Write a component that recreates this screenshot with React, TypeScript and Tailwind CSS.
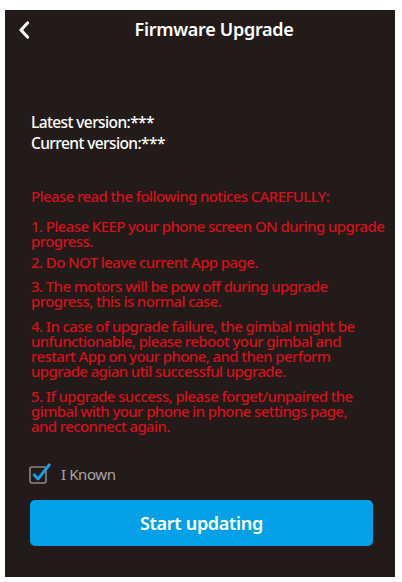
import React from 'react';

const notices: { lines: string[]; mt: string }[] = [
  { mt: 'mt-0', lines: ['1. Please KEEP your phone screen ON during upgrade', 'progress.'] },
  { mt: 'mt-[6px]', lines: ['2. Do NOT leave current App page.'] },
  { mt: 'mt-[9px]', lines: ['3. The motors will be pow off during upgrade', 'progress, this is normal case.'] },
  {
    mt: 'mt-[10px]',
    lines: [
      '4. In case of upgrade failure, the gimbal might be',
      'unfunctionable,  please reboot your gimbal and',
      'restart App on your phone, and then perform',
      'upgrade agian util successful upgrade.',
    ],
  },
  {
    mt: 'mt-[10px]',
    lines: [
      '5. If upgrade success, please forget/unpaired the',
      'gimbal with your phone in phone settings page,',
      'and reconnect again.',
    ],
  },
];

export default function App() {
  return (
    <div className="w-[402px] h-[582px] bg-white pt-[10px] pl-[5px]" style={{ fontFamily: '"Noto Sans", sans-serif' }}>
      <div className="w-[390px] h-[567px] bg-[#221b19] flex flex-col">
        {/* header */}
        <div className="relative h-[38px] flex items-center justify-center">
          <svg className="absolute left-[12px] top-[11px]" width="16" height="18" viewBox="0 0 16 18">
            <path d="M10.5 2 L4 9 L10.5 16" fill="none" stroke="#fff" strokeWidth="3.2" strokeLinecap="round" strokeLinejoin="round" />
          </svg>
          <span className="text-white text-[18px] font-semibold tracking-[-0.3px] ml-[28px]">Firmware Upgrade</span>
        </div>

        <div className="pl-[26px] pt-[64px] text-white text-[15.5px] leading-[21px] tracking-[-0.6px] font-medium">
          <p>Latest version:***</p>
          <p>Current version:***</p>
        </div>

        <div className="pl-[26px] pt-[32px] text-[#d4111c] text-[15px] tracking-[-0.6px] font-medium whitespace-nowrap">
          <p className="leading-[21px] mb-[12px]">Please read the following notices CAREFULLY:</p>
          {notices.map((n, i) => (
            <p key={i} className={`leading-[15px] ${n.mt}`}>
              {n.lines.map((l, j) => (
                <React.Fragment key={j}>
                  {l}
                  {j < n.lines.length - 1 && <br />}
                </React.Fragment>
              ))}
            </p>
          ))}
        </div>

        <div className="pl-[24px] h-[51px] flex items-end gap-[8px]">
          <svg width="24" height="24" viewBox="0 0 24 24">
            <rect x="1" y="6" width="16" height="16" rx="2" fill="none" stroke="#8a8684" strokeWidth="1.6" />
            <path d="M4.5 13 L9 18 L21 3" fill="none" stroke="#1b9be2" strokeWidth="3" strokeLinejoin="round" />
          </svg>
          <span className="text-[#a9a5a3] text-[15px] leading-[20px] tracking-[-0.4px] pb-[1px]">I Known</span>
        </div>

        <div className="pl-[25px] pr-[22px] pt-[15px]">
          <button className="w-full h-[46px] rounded-[5px] bg-[#05a1e8] text-white text-[18px] font-semibold tracking-[-0.3px]">
            Start updating
          </button>
        </div>
      </div>
    </div>
  );
}
